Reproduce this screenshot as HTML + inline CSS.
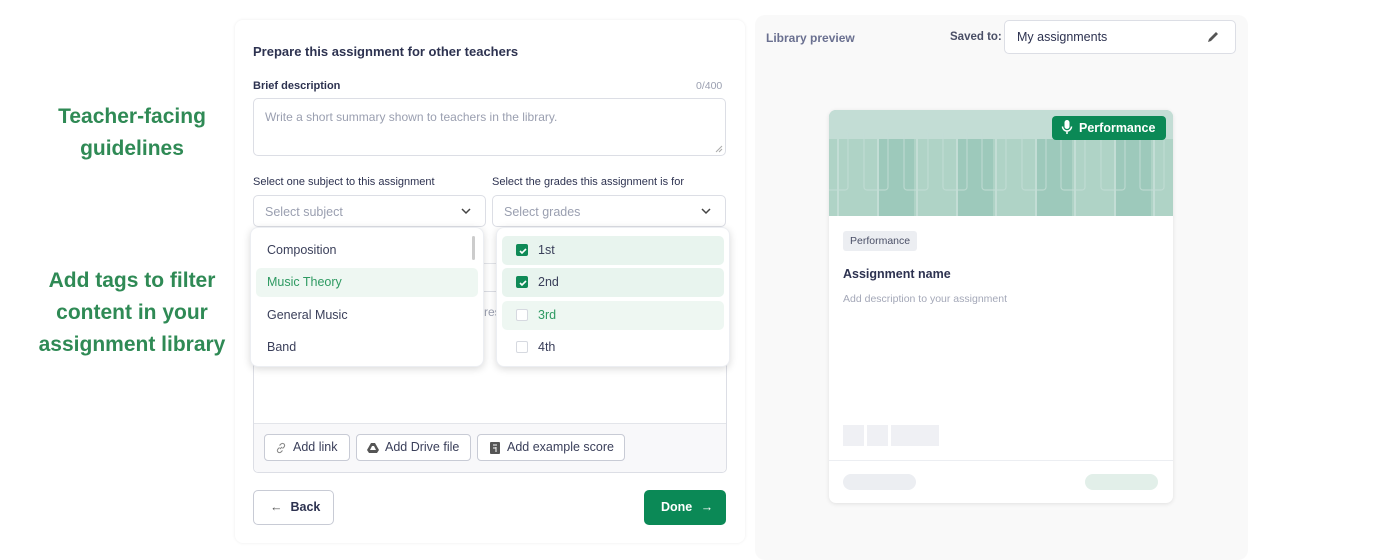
<!DOCTYPE html>
<html><head><meta charset="utf-8"><style>
*{box-sizing:border-box;margin:0;padding:0}
body{width:1400px;height:560px;background:#fff;font-family:"Liberation Sans",sans-serif;position:relative;overflow:hidden;color:#2d3250}
.abs{position:absolute}
.lbl{color:#2f8a55;font-weight:bold;font-size:21px;text-align:center;line-height:32px;width:264px;left:0}
.panel{left:235px;top:20px;width:510px;height:523px;background:#fff;border-radius:8px;box-shadow:0 0 3px rgba(0,0,0,.08)}
.t12{font-size:11px;color:#2d3250}
.box{border:1px solid #dcdee5;border-radius:5px;background:#fff}
.ph{color:#9a9fb0;font-size:12.5px}
.chev{position:absolute;right:14px;top:10px}
.dd{background:#fff;border-radius:8px;box-shadow:0 2px 8px rgba(0,0,0,.15);border:1px solid #eceef2}
.it{position:absolute;left:5px;right:5px;height:29px;border-radius:5px;font-size:12.5px;line-height:29px;padding-left:11px;color:#3a3f5a}
.cb{display:inline-block;width:12px;height:12px;border-radius:2px;vertical-align:-2px;margin-right:10px;border:1px solid #d6d9e0;background:#fff}
.cb.on{background:#0f8a57;border-color:#0f8a57;position:relative}
.btn{position:absolute;top:434px;height:27px;border:1px solid #c8cbd5;border-radius:4px;background:#fff;font-size:12.5px;line-height:25px;color:#3a3f5a;white-space:nowrap}
</style></head><body>
<div class="abs lbl" style="top:101px">Teacher-facing<br>guidelines</div>
<div class="abs lbl" style="top:265px">Add tags to filter<br>content in your<br>assignment library</div>

<div class="abs panel"></div>
<div class="abs" style="left:253px;top:44px;font-size:13px;font-weight:bold;color:#2d3250">Prepare this assignment for other teachers</div>
<div class="abs t12" style="left:253px;top:80px;font-weight:bold">Brief description</div>
<div class="abs" style="left:696px;top:80px;font-size:10.5px;color:#9a9fb0">0/400</div>
<div class="abs box" style="left:253px;top:98px;width:473px;height:58px"><div class="ph" style="padding:11px 11px;font-size:12px">Write a short summary shown to teachers in the library.</div>
<svg class="abs" style="right:2px;bottom:2px" width="8" height="8"><path d="M1 7L7 1M4 7L7 4" stroke="#aaa" stroke-width="1"/></svg></div>
<div class="abs t12" style="left:253px;top:176px">Select one subject to this assignment</div>
<div class="abs t12" style="left:492px;top:176px">Select the grades this assignment is for</div>
<div class="abs box" style="left:253px;top:195px;width:233px;height:32px"><div class="ph" style="padding:9px 11px">Select subject</div><svg class="chev" width="10" height="10"><path d="M1 3l4 4 4-4" fill="none" stroke="#444" stroke-width="1.5"/></svg></div>
<div class="abs box" style="left:492px;top:195px;width:234px;height:32px"><div class="ph" style="padding:9px 11px">Select grades</div><svg class="chev" width="10" height="10"><path d="M1 3l4 4 4-4" fill="none" stroke="#444" stroke-width="1.5"/></svg></div>

<div class="abs" style="left:253px;top:263px;width:473px;height:1px;background:#e3e5ea"></div>
<div class="abs" style="left:253px;top:291px;width:474px;height:182px;border:1px solid #dcdee5;border-radius:5px;background:#fff"></div>
<div class="abs" style="left:254px;top:423px;width:472px;height:49px;background:#f8f8fa;border-top:1px solid #e3e5ea;border-radius:0 0 5px 5px"></div>
<div class="abs" style="left:484px;top:305px;font-size:12px;color:#9a9fb0">res</div>
<div class="btn" style="left:264px;width:86px;padding-left:28px"><svg class="abs" style="left:10px;top:7px" width="12" height="12"><path d="M5 7l2-2M4.5 5.5l-1.5 1.5a2 2 0 003 3l1.5-1.5M7.5 6.5l1.5-1.5a2 2 0 00-3-3L4.5 3.5" fill="none" stroke="#888" stroke-width="1.1"/></svg>Add link</div>
<div class="btn" style="left:356px;width:115px;padding-left:28px"><svg class="abs" style="left:10px;top:7px" width="12" height="12"><path d="M4 1h4l4 7-2 3H2L0 8z" fill="#555"/><path d="M5 4h2l2 4H3z" fill="#fff"/></svg>Add Drive file</div>
<div class="btn" style="left:477px;width:148px;padding-left:29px"><svg class="abs" style="left:11px;top:7px" width="12" height="12"><rect x="1" y="0" width="10" height="12" rx="1" fill="#555"/><path d="M4 3h4M4 6h3M7 5v5" stroke="#fff" stroke-width="1"/></svg>Add example score</div>

<div class="abs" style="left:253px;top:490px;width:81px;height:35px;border:1px solid #c8cbd5;border-radius:5px;font-size:12.5px;font-weight:bold;line-height:33px;padding-left:16px;color:#2d3250"><span style="font-weight:normal;color:#555;margin-right:8px">←</span>Back</div>
<div class="abs" style="left:644px;top:490px;width:82px;height:35px;background:#0b8956;border-radius:5px;font-size:12.5px;font-weight:bold;line-height:35px;padding-left:17px;color:#fff">Done <span style="font-weight:normal;margin-left:5px">→</span></div>

<div class="abs dd" style="left:250px;top:227px;width:234px;height:140px">
<div class="it" style="top:8px">Composition</div>
<div class="it" style="top:40px;background:#eef7f2;color:#2e9a62">Music Theory</div>
<div class="it" style="top:73px">General Music</div>
<div class="it" style="top:105px">Band</div>
<div class="abs" style="left:221px;top:8px;width:3px;height:24px;background:#ccc;border-radius:2px"></div>
</div>
<div class="abs dd" style="left:496px;top:227px;width:234px;height:140px">
<div class="it" style="top:8px;background:#e8f4ee;padding-left:14px"><span class="cb on"><svg class="abs" style="left:1px;top:1px" width="10" height="10"><path d="M2 5l2 2 4-4" fill="none" stroke="#fff" stroke-width="1.6"/></svg></span>1st</div>
<div class="it" style="top:40px;background:#e8f4ee;padding-left:14px"><span class="cb on"><svg class="abs" style="left:1px;top:1px" width="10" height="10"><path d="M2 5l2 2 4-4" fill="none" stroke="#fff" stroke-width="1.6"/></svg></span>2nd</div>
<div class="it" style="top:73px;background:#eef7f2;padding-left:14px;color:#2e9a62"><span class="cb"></span>3rd</div>
<div class="it" style="top:105px;padding-left:14px"><span class="cb"></span>4th</div>
</div>

<div class="abs" style="left:755px;top:15px;width:493px;height:545px;background:#f9f9f9;border-radius:10px"></div>
<div class="abs" style="left:766px;top:31px;font-size:12px;font-weight:bold;color:#6a7090">Library preview</div>
<div class="abs" style="left:950px;top:31px;font-size:11.5px;font-weight:bold;color:#4a4f66;white-space:nowrap">Saved to:</div>
<div class="abs box" style="left:1004px;top:20px;width:232px;height:34px;font-size:12.5px;line-height:32px;padding-left:12px;color:#2d3250">My assignments
<svg class="abs" style="right:15px;top:9px" width="14" height="14"><path d="M2 12l1-3 7-7 2 2-7 7z" fill="#555"/></svg></div>

<div class="abs" style="left:829px;top:110px;width:344px;height:393px;background:#fff;border-radius:7px;box-shadow:0 1px 4px rgba(0,0,0,.1);overflow:hidden">
<svg width="344" height="106" style="display:block">
<rect width="344" height="106" fill="#afd3c6"/>
<rect width="344" height="29" fill="#c3ddd5"/>
<g fill="#9dc9bb"><rect x="49" y="29" width="36" height="77"/><rect x="128" y="29" width="36" height="77"/><rect x="207" y="29" width="36" height="77"/><rect x="286" y="29" width="36" height="77"/></g>
<g stroke="#c3ddd5" stroke-width="2"><path d="M9 29v77M49 29v77M88 29v77M128 29v77M167 29v77M207 29v77M246 29v77M286 29v77M325 29v77"/></g>
<g fill="none" stroke="#c3ddd5" stroke-width="1.2" opacity=".8"><rect x="-5" y="20" width="24" height="60" rx="3"/><rect x="35" y="20" width="24" height="60" rx="3"/><rect x="75" y="20" width="24" height="60" rx="3"/><rect x="114" y="20" width="24" height="60" rx="3"/><rect x="153" y="20" width="24" height="60" rx="3"/><rect x="193" y="20" width="24" height="60" rx="3"/><rect x="232" y="20" width="24" height="60" rx="3"/><rect x="272" y="20" width="24" height="60" rx="3"/><rect x="311" y="20" width="24" height="60" rx="3"/></g>
</svg>
<div class="abs" style="left:223px;top:6px;width:114px;height:24px;background:#0b8956;border-radius:4px;color:#fff;font-size:12.5px;font-weight:bold;line-height:24px;padding-left:27px">
<svg class="abs" style="left:9px;top:4px" width="12" height="16"><rect x="3.5" y="0" width="5" height="9" rx="2.5" fill="#fff"/><path d="M1.5 6.5a4.5 4.5 0 009 0M6 11v3" fill="none" stroke="#fff" stroke-width="1.5"/></svg>Performance</div>
<div class="abs" style="left:14px;top:121px;padding:0 7px;height:20px;background:#eceef2;border-radius:3px;font-size:10.5px;line-height:20px;color:#4a4f66">Performance</div>
<div class="abs" style="left:14px;top:157px;font-size:12.5px;font-weight:bold;color:#2d3250">Assignment name</div>
<div class="abs" style="left:14px;top:183px;font-size:10.5px;color:#a4a8b8">Add description to your assignment</div>
<div class="abs" style="left:14px;top:315px;width:21px;height:21px;background:#eff0f4"></div>
<div class="abs" style="left:38px;top:315px;width:21px;height:21px;background:#eff0f4"></div>
<div class="abs" style="left:62px;top:315px;width:48px;height:21px;background:#eff0f4"></div>
<div class="abs" style="left:0;top:350px;width:344px;height:1px;background:#eceef2"></div>
<div class="abs" style="left:14px;top:364px;width:73px;height:16px;background:#eceef2;border-radius:8px"></div>
<div class="abs" style="left:256px;top:364px;width:73px;height:16px;background:#e2efe9;border-radius:8px"></div>
</div>
</body></html>
